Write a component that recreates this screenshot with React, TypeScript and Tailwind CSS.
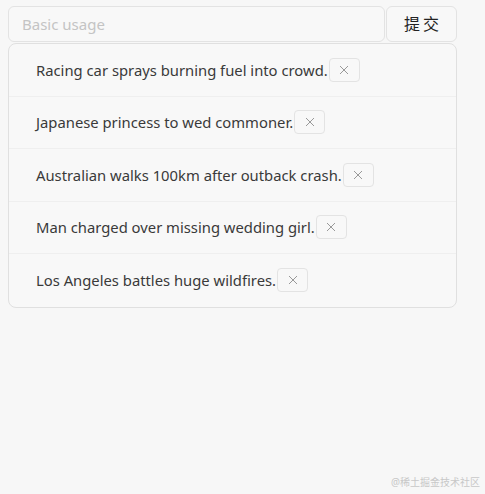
import React, { useState } from 'react';

const initial = [
  'Racing car sprays burning fuel into crowd.',
  'Japanese princess to wed commoner.',
  'Australian walks 100km after outback crash.',
  'Man charged over missing wedding girl.',
  'Los Angeles battles huge wildfires.',
];

export default function App() {
  const [items, setItems] = useState(initial);
  const [value, setValue] = useState('');

  return (
    <div
      className="min-h-[494px] bg-[#f7f7f7] px-2 pt-[6px] relative"
      style={{ fontFamily: '"Noto Sans", "Noto Sans CJK SC", sans-serif' }}
    >
      {/* Form */}
      <div className="flex w-[449px]">
        <input
          value={value}
          onChange={(e) => setValue(e.target.value)}
          placeholder="Basic usage"
          className="h-[36px] flex-1 rounded-[6px] border border-[#e3e3e3] bg-[#f8f8f8] px-[13px] text-[15px] text-[#333] outline-none placeholder:text-[#c4c4c4]"
        />
        <button
          onClick={() => {
            if (value.trim()) {
              setItems([...items, value.trim()]);
              setValue('');
            }
          }}
          className="ml-[1px] h-[36px] w-[71px] rounded-[6px] border border-[#e3e3e3] bg-[#f8f8f8] pl-[3px] text-[16px] tracking-[3px] text-[#222]"
        >
          提交
        </button>
      </div>

      {/* List */}
      <ul className="mt-[1px] w-[449px] rounded-[8px] border border-[#e0e0e0] bg-[#f8f8f8]">
        {items.map((item, i) => (
          <li
            key={item + i}
            className={
              'flex h-[52.5px] items-center pl-[27px] text-[14.8px] text-[#3a3a3a] ' +
              (i < items.length - 1 ? 'border-b border-[#efefef]' : '')
            }
          >
            <span>{item}</span>
            <button
              onClick={() => setItems(items.filter((_, j) => j !== i))}
              className="ml-[1px] flex h-[24px] w-[31px] items-center justify-center rounded-[4px] border border-[#e3e3e3] bg-[#f8f8f8] text-[#999]"
            >
              <svg width="10" height="10" viewBox="0 0 10 10" stroke="currentColor" strokeWidth="1">
                <path d="M1 1 L9 9 M9 1 L1 9" />
              </svg>
            </button>
          </li>
        ))}
      </ul>

      {/* Watermark */}
      <div className="absolute bottom-[4px] right-[5px] text-[10px] text-[#c8c8c8]">
        @稀土掘金技术社区
      </div>
    </div>
  );
}
